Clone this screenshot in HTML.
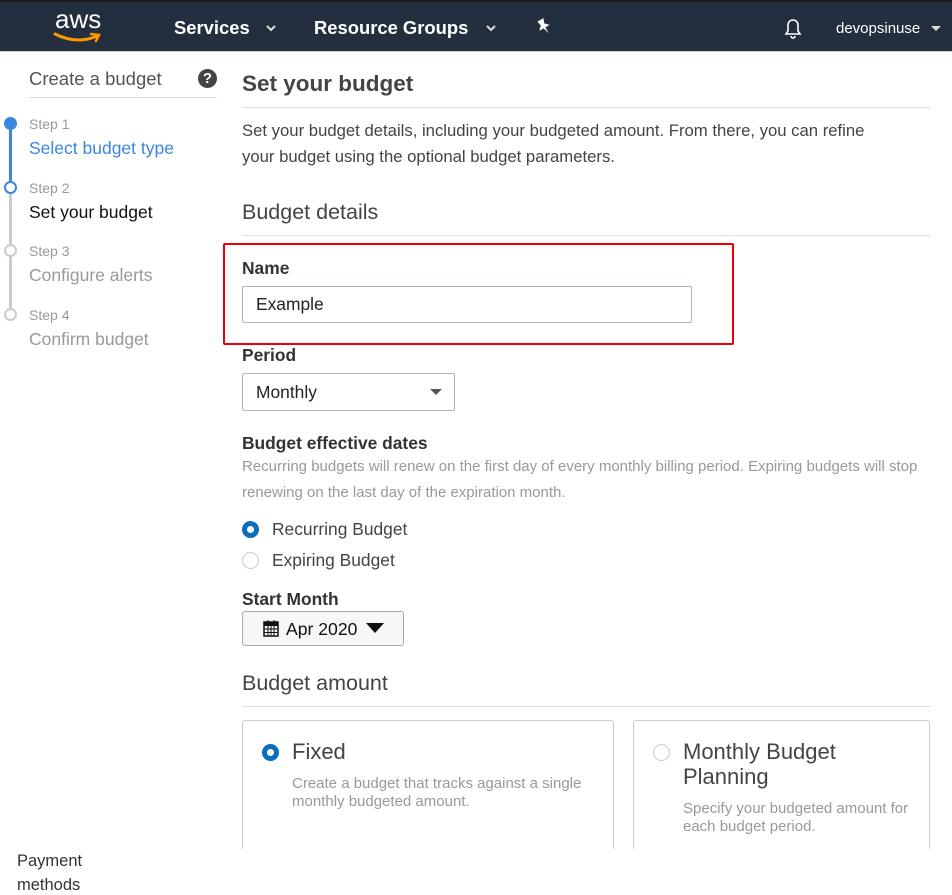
<!DOCTYPE html>
<html><head><meta charset="utf-8"><style>
*{box-sizing:border-box;margin:0;padding:0}
body{width:952px;height:884px;overflow:hidden;background:#fff;font-family:"Liberation Sans",Arial,sans-serif;color:#444;position:relative}
.a{position:absolute;white-space:nowrap}
#hdr{position:absolute;left:0;top:0;width:952px;height:52px;background:#232f3e;border-top:2px solid #1a1a1a;border-bottom:1px solid #ccc}
.nav{color:#fff;font-weight:bold;font-size:18.4px}
.step{font-size:14px;color:#999}
.sl{font-size:17.5px}
.h2{font-size:21.5px;color:#444}
.lbl{font-weight:bold;font-size:17.4px;color:#333}
.box{position:absolute;border:1px solid #aab7b8;border-radius:2px;background:#fff}
.muted{color:#999;font-size:15px}
</style></head><body>
<div id="hdr">
<div class="a" style="left:55px;top:2px;color:#fff;font-size:26px;letter-spacing:0">aws</div>
<svg class="a" style="left:53px;top:29px" width="50" height="14"><path d="M2 3 Q24 14 44 5" stroke="#f90" stroke-width="3" fill="none" stroke-linecap="round"/><path d="M38 3 L46 4 L43 10" stroke="#f90" stroke-width="2.5" fill="none" stroke-linecap="round"/></svg>
<div class="a nav" style="left:174px;top:15px">Services</div>
<svg class="a" style="left:265px;top:22px" width="12" height="8"><path d="M2 2 L6 6 L10 2" stroke="#ddd" stroke-width="2" fill="none"/></svg>
<div class="a nav" style="left:314px;top:15px">Resource Groups</div>
<svg class="a" style="left:485px;top:22px" width="12" height="8"><path d="M2 2 L6 6 L10 2" stroke="#ddd" stroke-width="2" fill="none"/></svg>
<svg class="a" style="left:535px;top:15px" width="18" height="20"><path d="M6 2 L13 2 L11 7 L15 11 L10 11 L10 18 L8 11 L3 11 L7 7Z" fill="#fff" transform="rotate(-30 9 10)"/></svg>
<svg class="a" style="left:782px;top:14px" width="22" height="24"><path d="M4 18 L6 15 L6 9 A5 5 0 0 1 16 9 L16 15 L18 18Z M9 20 A2 2 0 0 0 13 20" stroke="#fff" stroke-width="1.6" fill="none"/></svg>
<div class="a" style="left:836px;top:18px;color:#fff;font-size:15px">devopsinuse</div>
<svg class="a" style="left:930px;top:23px" width="12" height="8"><path d="M1 1 L6 6 L11 1Z" fill="#ddd"/></svg>
</div>

<div class="a" style="left:29px;top:68px;font-size:18.5px;color:#555">Create a budget</div>
<div class="a" style="left:198px;top:69px;width:19px;height:19px;border-radius:50%;background:#444;color:#fff;font-weight:bold;font-size:15px;text-align:center;line-height:19px">?</div>
<div class="a" style="left:29px;top:97px;width:188px;height:1px;background:#ddd"></div>

<div class="a" style="left:9px;top:124px;width:3px;height:63px;background:#3a87e0"></div>
<div class="a" style="left:9px;top:187px;width:3px;height:128px;background:#ccc"></div>
<div class="a" style="left:4px;top:117px;width:13px;height:13px;border-radius:50%;background:#3a87e0"></div>
<div class="a" style="left:4px;top:181px;width:13px;height:13px;border-radius:50%;background:#fff;border:2.5px solid #3a87e0"></div>
<div class="a" style="left:4px;top:244px;width:13px;height:13px;border-radius:50%;background:#fff;border:2.5px solid #ccc"></div>
<div class="a" style="left:4px;top:308px;width:13px;height:13px;border-radius:50%;background:#fff;border:2.5px solid #ccc"></div>
<div class="a step" style="left:29px;top:116px">Step 1</div>
<div class="a sl" style="left:29px;top:138px;color:#3a87e0">Select budget type</div>
<div class="a step" style="left:29px;top:180px">Step 2</div>
<div class="a sl" style="left:29px;top:202px;color:#111">Set your budget</div>
<div class="a step" style="left:29px;top:243px">Step 3</div>
<div class="a sl" style="left:29px;top:265px;color:#999">Configure alerts</div>
<div class="a step" style="left:29px;top:307px">Step 4</div>
<div class="a sl" style="left:29px;top:329px;color:#999">Confirm budget</div>

<div class="a" style="left:242px;top:71px;font-size:22.5px;font-weight:bold;color:#444">Set your budget</div>
<div class="a" style="left:242px;top:107px;width:689px;height:1px;background:#ddd"></div>
<div class="a" style="left:242px;top:118px;font-size:16.7px;line-height:26px;color:#444">Set your budget details, including your budgeted amount. From there, you can refine<br>your budget using the optional budget parameters.</div>
<div class="a h2" style="left:242px;top:200px">Budget details</div>
<div class="a" style="left:242px;top:235px;width:689px;height:1px;background:#ddd"></div>

<div class="a" style="left:223px;top:243px;width:511px;height:102px;border:2px solid #e8000c;border-radius:2px"></div>
<div class="a lbl" style="left:242px;top:258px">Name</div>
<div class="box" style="left:242px;top:286px;width:450px;height:37px"></div>
<div class="a" style="left:256px;top:294px;font-size:17.4px;color:#222">Example</div>

<div class="a lbl" style="left:242px;top:345px">Period</div>
<div class="box" style="left:242px;top:373px;width:213px;height:38px"></div>
<div class="a" style="left:256px;top:382px;font-size:17.4px;color:#222">Monthly</div>
<svg class="a" style="left:430px;top:388px" width="12" height="8"><path d="M0 1 L12 1 L6 7Z" fill="#555"/></svg>

<div class="a lbl" style="left:242px;top:433px">Budget effective dates</div>
<div class="a muted" style="left:242px;top:454px;line-height:26px">Recurring budgets will renew on the first day of every monthly billing period. Expiring budgets will stop<br>renewing on the last day of the expiration month.</div>

<div class="a" style="left:242px;top:521px;width:17px;height:17px;border-radius:50%;border:5px solid #0a6ebd;background:#fff"></div>
<div class="a" style="left:272px;top:519px;font-size:17.4px">Recurring Budget</div>
<div class="a" style="left:242px;top:552px;width:17px;height:17px;border-radius:50%;border:1px solid #ccc;background:#fff"></div>
<div class="a" style="left:272px;top:550px;font-size:17.4px">Expiring Budget</div>

<div class="a lbl" style="left:242px;top:589px">Start Month</div>
<div class="a" style="left:242px;top:611px;width:162px;height:35px;border:1px solid #aaa;border-radius:3px;background:#f7f7f7"></div>
<svg class="a" style="left:263px;top:619px" width="16" height="18"><rect x="1" y="3" width="14" height="14" fill="none" stroke="#111" stroke-width="1.5"/><rect x="1" y="3" width="14" height="4" fill="#111"/><path d="M5 1 V5 M11 1 V5 M1 10 H15 M1 13.5 H15 M5 7 V17 M8 7 V17 M11 7 V17" stroke="#111" stroke-width="1"/></svg>
<div class="a" style="left:286px;top:619px;font-size:17.6px;color:#111">Apr 2020</div>
<svg class="a" style="left:366px;top:623px" width="18" height="10"><path d="M0 0 L18 0 L9 10Z" fill="#111"/></svg>

<div class="a h2" style="left:242px;top:671px">Budget amount</div>
<div class="a" style="left:242px;top:706px;width:689px;height:1px;background:#ddd"></div>

<div class="a" style="left:242px;top:720px;width:372px;height:140px;border:1px solid #ccc;border-bottom:none;border-radius:3px 3px 0 0"></div>
<div class="a" style="left:262px;top:744px;width:17px;height:17px;border-radius:50%;border:5px solid #0a6ebd"></div>
<div class="a" style="left:292px;top:739px;font-size:22px">Fixed</div>
<div class="a muted" style="left:292px;top:775px;line-height:18px">Create a budget that tracks against a single<br>monthly budgeted amount.</div>

<div class="a" style="left:633px;top:720px;width:297px;height:140px;border:1px solid #ccc;border-bottom:none;border-radius:3px 3px 0 0"></div>
<div class="a" style="left:653px;top:744px;width:17px;height:17px;border-radius:50%;border:1px solid #ccc"></div>
<div class="a" style="left:683px;top:739px;font-size:22px;line-height:25px">Monthly Budget<br>Planning</div>
<div class="a muted" style="left:683px;top:800px;line-height:18px">Specify your budgeted amount for<br>each budget period.</div>

<div class="a" style="left:0;top:849px;width:952px;height:35px;background:#fff"></div>
<div class="a" style="left:17px;top:852px;font-size:16.5px;color:#333">Payment</div>
<div class="a" style="left:17px;top:876px;font-size:16.5px;color:#333">methods</div>
</body></html>
